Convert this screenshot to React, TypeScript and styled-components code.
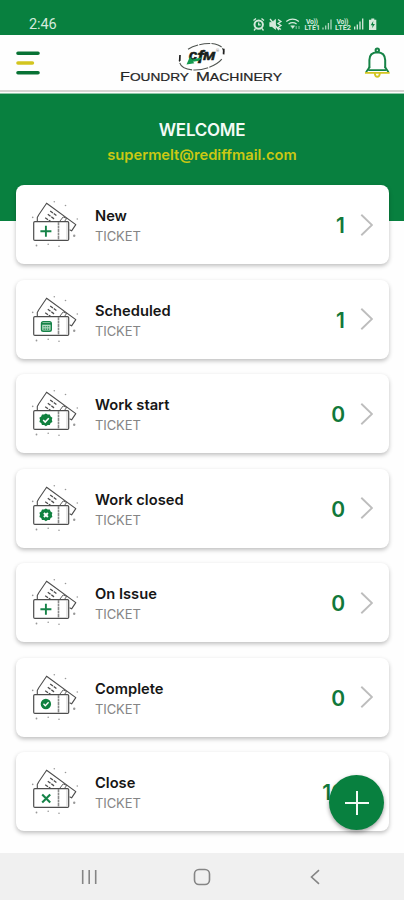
import React from "react";
import styled, { createGlobalStyle } from "styled-components";

const green = "#08803f";
const yellow = "#d3c51f";

const GlobalStyle = createGlobalStyle`
  * { box-sizing: border-box; }
  body { margin: 0; background: #fefefe; font-family: Inter, "Liberation Sans", sans-serif; }
  svg { display: block; flex: none; }
`;

const Screen = styled.div`
  width: 404px;
  height: 900px;
  display: flex;
  flex-direction: column;
  overflow: hidden;
  background: #fefefe;
`;

const StatusBar = styled.div`
  height: 35px;
  flex: none;
  display: flex;
  justify-content: space-between;
  padding: 15px 26px 0 29px;
  background: ${green};
  color: #d5eadc;
`;

const Clock = styled.span`
  font: 400 14.5px/20px Roboto, sans-serif;
  letter-spacing: -0.1px;
`;

const Header = styled.header`
  height: 59px;
  flex: none;
  display: flex;
  justify-content: space-between;
  padding: 0 13px 0 16px;
  background: #fefefe;
  border-bottom: 1px solid #8fc6a8;
  box-shadow: inset 0 -1px #fdfbfb, inset 0 -3px #d6d4d2;
`;

const Hero = styled.section`
  height: 127px;
  flex: none;
  padding-top: 25px;
  text-align: center;
  background: ${green};
`;

const Welcome = styled.h1`
  margin: 0;
  font-size: 17px;
  line-height: 22px;
  font-weight: 600;
  letter-spacing: -0.28px;
  color: #f4fbf6;
`;

const Email = styled.p`
  margin: 4px 0 0;
  font-size: 14.7px;
  line-height: 20px;
  font-weight: 600;
  letter-spacing: 0;
  color: #cbc813;
`;

const List = styled.main`
  flex: 1;
  display: flex;
  flex-direction: column;
  gap: 15.5px;
  margin-top: -36px;
  padding: 0 15px 0 16px;
`;

const Card = styled.article`
  height: 79px;
  flex: none;
  display: flex;
  align-items: center;
  padding: 0 16px 0 15px;
  background: #fff;
  border-radius: 8px;
  box-shadow: 0 2px 4px rgba(0, 0, 0, 0.25);
`;

const Labels = styled.div`
  flex: 1;
  margin-left: 16px;
  padding-top: 3px;
`;

const Name = styled.div`
  font-size: 14.7px;
  line-height: 20px;
  font-weight: 600;
  letter-spacing: 0;
  color: #161616;
`;

const Kind = styled.div`
  font: 400 13px/20px Inter, sans-serif;
  letter-spacing: -0.1px;
  color: #858585;
`;

const Count = styled.div`
  padding-top: 3px;
  margin-right: 15px;
  font-size: 21px;
  line-height: 26px;
  font-weight: 600;
  color: #11783a;
`;

const NavBar = styled.nav`
  height: 47px;
  flex: none;
  display: flex;
  justify-content: space-between;
  align-items: center;
  padding: 0 80px;
  background: #f0f0f0;
`;

const AddButton = styled.button`
  position: absolute;
  left: 329px;
  top: 775px;
  width: 55px;
  height: 55px;
  display: grid;
  place-items: center;
  padding: 0;
  border: 0;
  border-radius: 50%;
  background: ${green};
  box-shadow: 0 2px 4px rgba(0, 0, 0, 0.38);
`;

type Mark = "plus" | "calendar" | "check" | "crossBadge" | "cross" | "checkRound";

const scallop =
  "M14 22.6l1.8 1.2 2.1-.1.8 2 1.8 1.2-.6 2.1.6 2.1-1.8 1.2-.8 2-2.1-.1-1.8 1.2-1.8-1.2-2.1.1-.8-2-1.8-1.2.6-2.1-.6-2.1 1.8-1.2.8-2 2.1.1z";

const MarkShape = ({ mark }: { mark: Mark }) => {
  switch (mark) {
    case "plus":
      return <path d="M14 24v11M8.5 29.5h11" stroke="#168348" strokeWidth="1.9" fill="none" />;
    case "cross":
      return <path d="M10.3 25.6l8 8M18.3 25.6l-8 8" stroke="#168348" strokeWidth="2.1" fill="none" />;
    case "calendar":
      return (
        <g fill="none" stroke="#168348">
          <rect x="9.6" y="24.8" width="9.8" height="9.6" rx="1.8" fill="#b7dcc5" strokeWidth="1.4" />
          <path d="M9.6 27h9.8" strokeWidth="1.8" />
          <path d="M11.5 30h6.3M11.5 32.3h6.3" strokeDasharray="1.5 .7" strokeWidth="1.1" />
        </g>
      );
    case "check":
      return (
        <g>
          <path d={scallop} fill="#10813f" />
          <path d="M11.3 29.2l2 2 3.6-3.8" fill="none" stroke="#fff" strokeWidth="1.6" />
        </g>
      );
    case "crossBadge":
      return (
        <g>
          <path d={scallop} fill="#10813f" />
          <path d="M12 27.2l4 4M16 27.2l-4 4" fill="none" stroke="#fff" strokeWidth="1.9" />
        </g>
      );
    case "checkRound":
      return (
        <g>
          <circle cx="14" cy="29.2" r="5.2" fill="#10813f" />
          <path d="M11.6 29l1.8 1.9 3.3-3.5" fill="none" stroke="#fff" strokeWidth="1.3" />
        </g>
      );
  }
};

const TicketIcon = ({ mark }: { mark: Mark }) => (
  <svg width="48" height="49" viewBox="0 0 48 49">
    <g fill="none" stroke="#4d4d4d" strokeWidth="1.1" strokeLinejoin="round">
      <path d="M6.3 21.5v-4l1.5-2.7L15.6 3.2 44.8 24.6l-4.2 6.3-2-1.2" fill="#fff" />
      <path d="M28.6 21.5l3.6-4.6 3.4 1.6-2 2.8" strokeWidth=".9" />
      <path d="M14.2 17.8l5.3 3.6M16.8 14.2l6.8 5.1M19.2 10.9l6.2 4.6" strokeWidth="1.3" strokeDasharray="3.4 1" />
      <rect x="2.7" y="21.6" width="35" height="18.8" rx="1.2" fill="#fff" strokeWidth="1.2" />
      <path d="M27.5 22v18" stroke="#8a8a8a" strokeWidth="1.6" strokeDasharray="3 .5" />
      <path d="M36 22v17" stroke="#bbb" strokeWidth=".7" />
    </g>
    <g fill="#999">
      <circle cx="23.3" cy="1.8" r=".8" />
      <circle cx="34.5" cy="5.5" r=".8" />
      <circle cx="1.7" cy="17.4" r=".8" />
      <circle cx="46.3" cy="19" r=".8" />
      <circle cx="43.2" cy="35.7" r="1.2" />
      <circle cx="5.5" cy="45.5" r=".9" />
      <circle cx="17.2" cy="44.2" r=".8" />
      <circle cx="28" cy="46.2" r=".8" />
    </g>
    <g transform="translate(.9 1.8)">
      <MarkShape mark={mark} />
    </g>
  </svg>
);

const Chevron = () => (
  <svg width="13" height="24" viewBox="0 0 13 24">
    <path d="M1.3 1.7L12 12 1.3 22.3" fill="none" stroke="#bdbdbd" strokeWidth="1.9" />
  </svg>
);

const StatusIcons = () => (
  <svg width="126" height="18" viewBox="252 15 126 18">
    <g fill="none" stroke="#d5eadc" strokeWidth="1.3">
      <circle cx="258.7" cy="24.6" r="4.2" strokeWidth="2" />
      <path d="M253.5 20.5l2.5-2M264 20.5l-2.5-2M255.5 28.5l-1.5 2M262 28.5l1.5 2M258.7 22.4v2.5h2" />
      <path d="M269.8 22.4h2.2l3.5-3v10l-3.5-3h-2.2z" fill="#d5eadc" strokeWidth=".8" />
      <path d="M270 19l9 11M278 19.5l3 2-3 2 3 2-3 2 3 2" />
      <path d="M286.3 21.4q6.3-4.6 12.6 0M288.6 24q4-2.6 8 0" />
      <path d="M290.7 25.8h4l-2 2.7z" fill="#d5eadc" strokeWidth=".5" />
      <path d="M296.2 29v-3M299 26v3" strokeWidth=".9" opacity=".7" />
      <path d="M323 29.5v-2M325.7 29.5v-4M328.4 29.5v-6.5M331 29.5V19.5" opacity=".8" />
      <path d="M354.7 29.5v-3M357.3 29.5v-5M360 29.5v-8M362.7 29.5V18.5" />
    </g>
    <g fill="#d5eadc" fontFamily="Roboto, sans-serif" fontWeight="700" fontSize="6.8">
      <text x="306" y="23.8" textLength="12">Vo))</text>
      <text x="304.5" y="30.2" textLength="15.5" lengthAdjust="spacingAndGlyphs">LTE1</text>
      <text x="336.5" y="23.8" textLength="12">Vo))</text>
      <text x="335" y="30.2" textLength="16" lengthAdjust="spacingAndGlyphs">LTE2</text>
    </g>
    <path d="M371.3 18.5h3v1.2h2v10.3h-7.3V19.7h2.3z" fill="#d5eadc" />
    <path d="M373.3 21l-2.6 4.3h1.9l-.5 3 2.8-4.2H373z" fill={green} />
  </svg>
);

const MenuIcon = () => (
  <svg width="26" height="58" viewBox="16 35 26 58">
    <g strokeWidth="3.6" strokeLinecap="round">
      <path d="M18 53.2h20M18 72.8h20" stroke="#087235" />
      <path d="M18 63h14.4" stroke={yellow} />
    </g>
  </svg>
);

const Logo = () => (
  <svg width="170" height="58" viewBox="119 35 170 58">
    <g fill="none" stroke="#4f5450" strokeWidth="1.1">
      <path d="M189 49.2c8-5 22-7.5 30-4.3 4.8 2 6.3 5.3 5.4 8.6" strokeDasharray="11 1.2" />
      <path d="M222.8 59.2c-5 6.2-17.8 11.4-29 10.7-10-.6-14.6-5.4-13.1-11.3" strokeDasharray="15 1.2" />
      <path d="M224.8 48.7l-.2 5.7M181 55l-.3 6" stroke="#222" strokeWidth="1.7" />
    </g>
    <g fill="#172019" stroke="#172019" strokeWidth=".5" fontFamily="Liberation Sans, sans-serif" fontWeight="700" fontStyle="italic">
      <text x="189.7" y="59.5" fontSize="15.5">c</text>
      <text x="198.2" y="62.5" fontSize="19">f</text>
      <text x="204" y="60" fontSize="10.5" textLength="12" lengthAdjust="spacingAndGlyphs">M</text>
    </g>
    <path d="M187.5 64.5l3.4-7.8 2.4 2.9 10-2.4-3.4 3.6-5.9.9 1.4 1.5z" fill="#13994d" />
    <text x="217" y="52" fontSize="4" fontFamily="Roboto, sans-serif" fill="#777">®</text>
    <g fill="#242424" fontFamily="Liberation Sans, sans-serif" stroke="#242424" strokeWidth=".2">
      <text x="121" y="80.8" fontSize="12.6" textLength="69" lengthAdjust="spacingAndGlyphs">
        F<tspan fontSize="10.6">OUNDRY</tspan>
      </text>
      <text x="197" y="80.8" fontSize="12.6" textLength="86" lengthAdjust="spacingAndGlyphs">
        M<tspan fontSize="10.6">ACHINERY</tspan>
      </text>
    </g>
  </svg>
);

const BellIcon = () => (
  <svg width="28" height="58" viewBox="363 35 28 58">
    <g fill="none" strokeWidth="2" strokeLinecap="round" strokeLinejoin="round">
      <circle cx="377.3" cy="50.3" r="1.7" stroke="#168346" />
      <path d="M369.4 67.5V60q0-7.5 7.9-7.8 7.7.3 7.9 7.8v7.5" stroke="#168346" />
      <path d="M369.4 67.2l-3.2 4.7M385.2 67.2l3.2 4.7M369 70.1h16.6" stroke="#168346" strokeWidth="1.8" />
      <path d="M365.8 72.9h23M374.9 74q.3 2.8 2.4 2.8t2.4-2.8" stroke={yellow} strokeWidth="1.9" />
    </g>
  </svg>
);

const tickets: { name: string; count: number; mark: Mark }[] = [
  { name: "New", count: 1, mark: "plus" },
  { name: "Scheduled", count: 1, mark: "calendar" },
  { name: "Work start", count: 0, mark: "check" },
  { name: "Work closed", count: 0, mark: "crossBadge" },
  { name: "On Issue", count: 0, mark: "plus" },
  { name: "Complete", count: 0, mark: "checkRound" },
  { name: "Close", count: 10, mark: "cross" },
];

export default function App() {
  return (
    <Screen>
      <GlobalStyle />
      <StatusBar>
        <Clock>2:46</Clock>
        <StatusIcons />
      </StatusBar>
      <Header>
        <MenuIcon />
        <Logo />
        <BellIcon />
      </Header>
      <Hero>
        <Welcome>WELCOME</Welcome>
        <Email>supermelt@rediffmail.com</Email>
      </Hero>
      <List>
        {tickets.map((t) => (
          <Card key={t.name}>
            <TicketIcon mark={t.mark} />
            <Labels>
              <Name>{t.name}</Name>
              <Kind>TICKET</Kind>
            </Labels>
            <Count>{t.count}</Count>
            <Chevron />
          </Card>
        ))}
      </List>
      <AddButton aria-label="Add ticket">
        <svg width="26" height="26" viewBox="0 0 26 26">
          <path d="M13 1v24M1 13h24" stroke="#f4fbf6" strokeWidth="2" />
        </svg>
      </AddButton>
      <NavBar>
        <svg width="18" height="18" viewBox="0 0 18 18">
          <path d="M2.7 2v14M9.2 2v14M15.7 2v14" stroke="#858585" strokeWidth="1.6" />
        </svg>
        <svg width="18" height="18" viewBox="0 0 18 18">
          <rect x="1.5" y="1.5" width="15" height="15" rx="4.5" fill="none" stroke="#858585" strokeWidth="1.6" />
        </svg>
        <svg width="18" height="18" viewBox="0 0 18 18">
          <path d="M13 2.2L5.5 9l7.5 6.8" fill="none" stroke="#858585" strokeWidth="1.6" />
        </svg>
      </NavBar>
    </Screen>
  );
}
